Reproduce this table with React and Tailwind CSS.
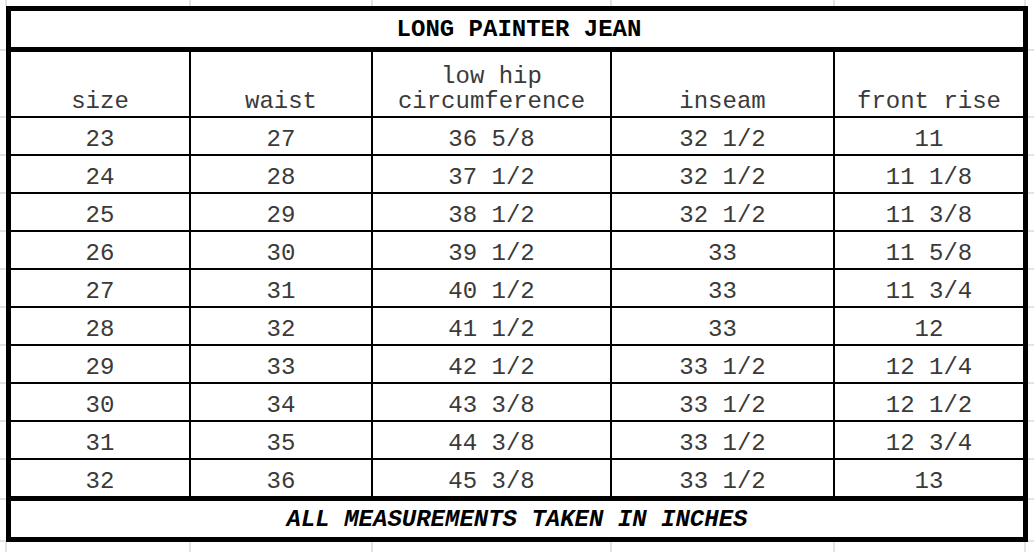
import React from "react";

const rows = [
  ["23", "27", "36 5/8", "32 1/2", "11"],
  ["24", "28", "37 1/2", "32 1/2", "11 1/8"],
  ["25", "29", "38 1/2", "32 1/2", "11 3/8"],
  ["26", "30", "39 1/2", "33", "11 5/8"],
  ["27", "31", "40 1/2", "33", "11 3/4"],
  ["28", "32", "41 1/2", "33", "12"],
  ["29", "33", "42 1/2", "33 1/2", "12 1/4"],
  ["30", "34", "43 3/8", "33 1/2", "12 1/2"],
  ["31", "35", "44 3/8", "33 1/2", "12 3/4"],
  ["32", "36", "45 3/8", "33 1/2", "13"],
];

const colCls = [
  "w-[178px]",
  "w-[182px] border-l-2 border-black",
  "w-[239px] border-l-2 border-black",
  "w-[223px] border-l-2 border-black",
  "w-[190px] border-l-2 border-black",
];

const font = { fontFamily: '"Liberation Mono", "DejaVu Sans Mono", monospace' };

function VStrip({ h }) {
  return (
    <div className={`flex ${h} shrink-0`}>
      <div className="w-[5px] shrink-0" />
      <div className="w-[184px] shrink-0 border-l-2 border-[#e3e3e3]" />
      <div className="w-[182px] shrink-0 border-l-2 border-[#e3e3e3]" />
      <div className="w-[239px] shrink-0 border-l-2 border-[#e3e3e3]" />
      <div className="w-[223px] shrink-0 border-l-2 border-[#e3e3e3]" />
      <div className="w-[191px] shrink-0 border-l-2 border-[#e3e3e3]" />
      <div className="w-[10px] shrink-0 border-l-2 border-[#e3e3e3]" />
    </div>
  );
}

function SideStrip() {
  return (
    <div className="w-[6px] shrink-0 flex flex-col">
      <div className="h-[43px]" />
      <div className="h-[67px] border-t-2 border-[#e3e3e3]" />
      {Array.from({ length: 9 }).map((_, i) => (
        <div key={i} className="h-[38px] border-t-2 border-[#e3e3e3]" />
      ))}
      <div className="h-[40px] border-t-2 border-[#e3e3e3]" />
      <div className="h-[42px] border-t-2 border-[#e3e3e3]" />
      <div className="h-[2px] border-t-2 border-[#e3e3e3]" />
    </div>
  );
}

export default function App() {
  return (
    <div
      className="w-[1034px] h-[552px] bg-white flex flex-col overflow-hidden text-[24px]"
      style={font}
    >
      <VStrip h="h-[6px]" />
      <div className="flex">
        <SideStrip />
        <div className="w-[1022px] shrink-0 border-[5px] border-black flex flex-col">
          <div className="h-[36px] flex items-end justify-center pb-[5px] pl-[4px] leading-none font-bold text-black whitespace-pre">
            LONG PAINTER JEAN
          </div>
          <div className="h-[69px] border-t-[5px] border-black flex text-[#3a3a3a]">
            {["size", "waist", null, "inseam", "front rise"].map((t, i) => (
              <div
                key={i}
                className={`${colCls[i]} shrink-0 flex flex-col justify-end items-center text-center leading-[25px] pb-[2px] whitespace-pre`}
              >
                {t === null ? (
                  <>
                    <span>low hip</span>
                    <span>circumference</span>
                  </>
                ) : (
                  <span>{t}</span>
                )}
              </div>
            ))}
          </div>
          {rows.map((r, ri) => (
            <div key={ri} className="h-[38px] border-t-2 border-black flex text-[#3a3a3a]">
              {r.map((c, ci) => (
                <div
                  key={ci}
                  className={`${colCls[ci]} shrink-0 flex items-end justify-center leading-none pb-[2px] whitespace-pre`}
                >
                  {c}
                </div>
              ))}
            </div>
          ))}
          <div className="h-[41px] border-t-[5px] border-black flex items-end justify-center pb-[5px] leading-none font-bold italic text-black whitespace-pre">
            ALL MEASUREMENTS TAKEN IN INCHES
          </div>
        </div>
        <SideStrip />
      </div>
      <VStrip h="h-[10px]" />
    </div>
  );
}
